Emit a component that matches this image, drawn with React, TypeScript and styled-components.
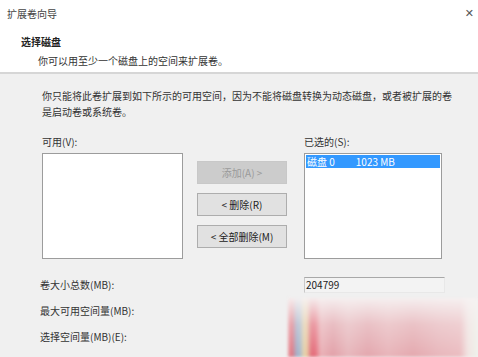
import React from "react";
import styled, { createGlobalStyle } from "styled-components";

const Global = createGlobalStyle`
  html, body { margin: 0; padding: 0; background: #ffffff; }
  body { font-family: "Noto Sans CJK SC", "Noto Sans", sans-serif; font-size: 10px; color: #333; }
`;

const Window = styled.div`
  position: relative;
  width: 478px;
  height: 357px;
  overflow: hidden;
  background: #ffffff;
  display: flex;
  flex-direction: column;
`;

const TitleBar = styled.div`
  height: 26px;
  display: flex;
  align-items: center;
  justify-content: space-between;
  padding: 0 4px 0 7px;
  color: #444;
  font-size: 10px;
`;

const Close = styled.span`
  font-family: "DejaVu Sans", sans-serif;
  font-size: 11px;
  color: #555;
`;

const Header = styled.div`
  height: 48px;
  padding: 8px 0 0 21px;
  box-sizing: border-box;
  display: flex;
  flex-direction: column;
  border-bottom: 2px solid #d6d6d6;
`;

const HeaderTitle = styled.div`
  font-weight: 700;
  font-size: 10px;
  line-height: 16px;
  color: #222;
`;

const HeaderSub = styled.div`
  padding-left: 17px;
  line-height: 16px;
  margin-top: 3px;
  color: #333;
`;

const Body = styled.div`
  flex: 1;
  background: #f0f0f0;
  padding: 14px 0 0 42px;
  display: flex;
  flex-direction: column;
`;

const Para = styled.div`
  line-height: 16px;
  color: #333;
  white-space: nowrap;
`;

const Lists = styled.div`
  margin-top: 14px;
  display: grid;
  grid-template-columns: 141px 90px 141px;
  column-gap: 14px;
  align-items: start;
`;

const ListCol = styled.div`
  display: flex;
  flex-direction: column;
  gap: 3px;
`;

const Label = styled.div`
  line-height: 16px;
  color: #333;
`;

const ListBox = styled.div`
  height: 106px;
  box-sizing: border-box;
  background: #ffffff;
  border: 1px solid #9c9c9c;
  padding: 1px;
`;

const Item = styled.div`
  height: 13px;
  display: flex;
  align-items: center;
  background: #3399ff;
  color: #ffffff;
  line-height: 13px;
  padding-left: 1px;
  gap: 21px;
`;

const Buttons = styled.div`
  margin-top: 27px;
  display: flex;
  flex-direction: column;
  gap: 9px;
`;

const Button = styled.div<{ $disabled?: boolean }>`
  height: 23px;
  box-sizing: border-box;
  display: flex;
  align-items: center;
  justify-content: center;
  border: 1px solid ${(p) => (p.$disabled ? "#c8c8c8" : "#adadad")};
  background: ${(p) => (p.$disabled ? "#cccccc" : "#e1e1e1")};
  color: ${(p) => (p.$disabled ? "#9a9a9a" : "#222")};
`;

const RightCol = styled(ListCol)`
  margin-left: 3px;
`;

const Fields = styled.div`
  margin-top: 18px;
  margin-left: -2px;
  display: flex;
  flex-direction: column;
  gap: 10px;
`;

const FieldRow = styled.div`
  display: grid;
  grid-template-columns: 264px 141px;
  align-items: center;
  height: 16px;
`;

const ValueBox = styled.div`
  height: 16px;
  box-sizing: border-box;
  border-top: 1px solid #a8a8a8;
  border-left: 1px solid #c8c8c8;
  border-right: 1px solid #e8e8e8;
  border-bottom: 1px solid #e8e8e8;
  background: #f3f3f3;
  line-height: 14px;
  padding-left: 1px;
  color: #222;
`;

const Watermark = styled.div`
  position: absolute;
  left: 288px;
  top: 298px;
  width: 190px;
  height: 59px;
  background:
    linear-gradient(to bottom, rgba(246,242,242,0.95) 0%, rgba(246,242,242,0.35) 45%, rgba(246,242,242,0) 100%),
    linear-gradient(to right,
      #e8949c 0px, #e07480 4px, #9fb2cc 9px, #a8b8cc 12px, #e6d2a8 16px, #e8c8a0 19px,
      #e26e7c 23px, #e66a78 27px, #eab0b6 33px, #e2a0a8 45px, #e7b6bb 60px, #e3a6ad 80px,
      #e8b4b9 100px, #e4a8ae 125px, #e8b6bb 150px, #ebbcc0 172px, #f1e4e2 180px, #eef2ea 190px);
  filter: blur(1.5px);
`;

export default function App() {
  return (
    <>
      <Global />
      <Window>
        <TitleBar>
          <span>扩展卷向导</span>
          <Close>✕</Close>
        </TitleBar>
        <Header>
          <HeaderTitle>选择磁盘</HeaderTitle>
          <HeaderSub>你可以用至少一个磁盘上的空间来扩展卷。</HeaderSub>
        </Header>
        <Body>
          <Para>你只能将此卷扩展到如下所示的可用空间，因为不能将磁盘转换为动态磁盘，或者被扩展的卷</Para>
          <Para>是启动卷或系统卷。</Para>
          <Lists>
            <ListCol>
              <Label>可用(V):</Label>
              <ListBox />
            </ListCol>
            <Buttons>
              <Button $disabled>添加(A) &gt;</Button>
              <Button>&lt; 删除(R)</Button>
              <Button>&lt; 全部删除(M)</Button>
            </Buttons>
            <RightCol>
              <Label>已选的(S):</Label>
              <ListBox>
                <Item>
                  <span>磁盘 0</span>
                  <span>1023 MB</span>
                </Item>
              </ListBox>
            </RightCol>
          </Lists>
          <Fields>
            <FieldRow>
              <Label>卷大小总数(MB):</Label>
              <ValueBox>204799</ValueBox>
            </FieldRow>
            <FieldRow>
              <Label>最大可用空间量(MB):</Label>
            </FieldRow>
            <FieldRow>
              <Label>选择空间量(MB)(E):</Label>
            </FieldRow>
          </Fields>
        </Body>
        <Watermark />
      </Window>
    </>
  );
}
